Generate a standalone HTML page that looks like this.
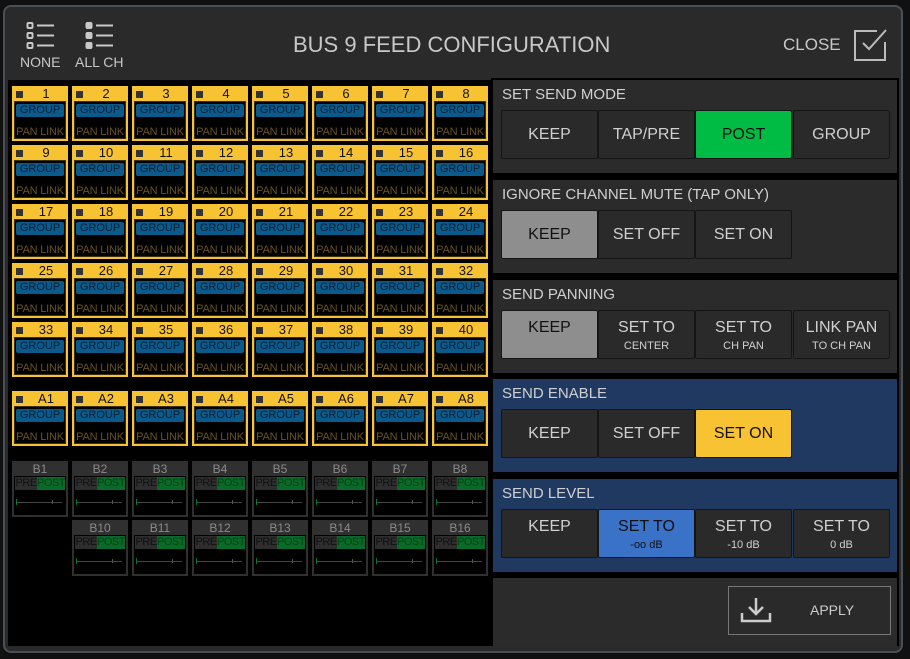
<!DOCTYPE html>
<html><head><meta charset="utf-8"><style>
*{box-sizing:border-box;margin:0;padding:0}
body{width:910px;height:659px;background:#111;font-family:"Liberation Sans",sans-serif;position:relative;overflow:hidden}
.dlg{position:absolute;left:3px;top:5px;width:900px;height:648px;background:#2a2a2a;border:2px solid #4a5055;border-radius:8px}
.a{position:absolute}
.hdr{color:#c8c8c8}
.lp{position:absolute;left:8px;top:80px;width:483px;height:566px;background:#000}
.c{position:absolute;width:56px;height:55px;background:#f8c332}
.c .sq{position:absolute;left:4px;top:5px;width:7px;height:7px;background:#333}
.c .n{position:absolute;left:12px;right:0;top:0px;text-align:center;font-size:13px;color:#111}
.c .in{position:absolute;left:2px;top:15px;width:52px;height:38px;background:#000;border:1px solid #3a2f10}
.c .g{position:absolute;left:1px;top:2px;width:48px;height:13px;background:#0b5a8c;border-radius:2px;font-size:11px;color:#0c1f33;text-align:center;line-height:13px}
.c .p{position:absolute;left:0;right:0;top:24px;font-size:11px;color:#6a5220;text-align:center;white-space:nowrap;letter-spacing:-0.2px}
.b{position:absolute;width:56px;height:56px;background:#303030}
.b .l{position:absolute;left:0;right:0;top:1px;text-align:center;font-size:12px;color:#8a8a8a}
.b .in{position:absolute;left:2px;top:15px;width:52px;height:39px;background:#000}
.b .pre{position:absolute;left:1px;top:1px;width:22px;height:13px;background:#2e2e2e;font-size:11px;line-height:13px;text-align:center;color:#111;letter-spacing:-0.5px}
.b .po{position:absolute;left:23px;top:1px;width:28px;height:13px;background:#0a6a2a;font-size:11px;line-height:13px;text-align:center;color:#041;letter-spacing:-0.5px}
.b .ln{position:absolute;left:2px;top:26px;width:46px;height:1px;background:#444}
.b .tk{position:absolute;left:2px;top:23px;width:1px;height:6px;background:#0a7a2a}
.b .tm{position:absolute;left:38px;top:24px;width:1px;height:4px;background:#555}
.sec{position:absolute;left:493px;width:404px;background:#2b2b2b}
.sec.bl{background:#1f3961}
.sec .t{position:absolute;left:9px;top:6px;font-size:15px;color:#d0d0d0}
.bt{position:absolute;height:49px;width:97px;background:#2a2a2a;border:1px solid #151515;border-radius:2px;color:#d0d0d0;text-align:center;font-size:16px}
.bt .m{display:block;margin-top:15px}
.bt.two .m{margin-top:8px}
.bt small{display:block;font-size:11px;margin-top:3px}
</style></head><body>
<div class="dlg"></div>
<svg class="a" style="left:26px;top:21px" width="32" height="30" viewBox="0 0 32 30" fill="none" stroke="#c8c8c8" stroke-width="2"><rect x="1.5" y="2" width="5" height="5" rx="1"/><rect x="1.5" y="12" width="5" height="5" rx="1"/><rect x="1.5" y="22" width="5" height="5" rx="1"/><path d="M11 4.5h17M11 14.5h17M11 24.5h17"/></svg>
<svg class="a" style="left:85px;top:21px" width="32" height="30" viewBox="0 0 32 30" fill="#c8c8c8" stroke="#c8c8c8" stroke-width="2"><rect x="1.5" y="2" width="5" height="5" rx="1"/><rect x="1.5" y="12" width="5" height="5" rx="1"/><rect x="1.5" y="22" width="5" height="5" rx="1"/><path d="M11 4.5h17M11 14.5h17M11 24.5h17"/></svg>
<div class="a hdr" style="left:20px;top:54px;font-size:14px">NONE</div>
<div class="a hdr" style="left:75px;top:54px;font-size:14px">ALL CH</div>
<div class="a hdr" style="left:293px;top:32px;font-size:22px">BUS 9 FEED CONFIGURATION</div>
<div class="a hdr" style="left:783px;top:35px;font-size:17px">CLOSE</div>
<svg class="a" style="left:853px;top:28px" width="35" height="34" viewBox="0 0 35 34" fill="none" stroke="#bbb" stroke-width="2"><path d="M24 3H2v29h30V14"/><path d="M10 15l6 6L33 2"/></svg>
<div class="lp"></div>

<div class="c" style="left:12px;top:86px"><div class="sq"></div><div class="n">1</div><div class="in"><div class="g">GROUP</div><div class="p">PAN LINK</div></div></div>
<div class="c" style="left:72px;top:86px"><div class="sq"></div><div class="n">2</div><div class="in"><div class="g">GROUP</div><div class="p">PAN LINK</div></div></div>
<div class="c" style="left:132px;top:86px"><div class="sq"></div><div class="n">3</div><div class="in"><div class="g">GROUP</div><div class="p">PAN LINK</div></div></div>
<div class="c" style="left:192px;top:86px"><div class="sq"></div><div class="n">4</div><div class="in"><div class="g">GROUP</div><div class="p">PAN LINK</div></div></div>
<div class="c" style="left:252px;top:86px"><div class="sq"></div><div class="n">5</div><div class="in"><div class="g">GROUP</div><div class="p">PAN LINK</div></div></div>
<div class="c" style="left:312px;top:86px"><div class="sq"></div><div class="n">6</div><div class="in"><div class="g">GROUP</div><div class="p">PAN LINK</div></div></div>
<div class="c" style="left:372px;top:86px"><div class="sq"></div><div class="n">7</div><div class="in"><div class="g">GROUP</div><div class="p">PAN LINK</div></div></div>
<div class="c" style="left:432px;top:86px"><div class="sq"></div><div class="n">8</div><div class="in"><div class="g">GROUP</div><div class="p">PAN LINK</div></div></div>

<div class="c" style="left:12px;top:145px"><div class="sq"></div><div class="n">9</div><div class="in"><div class="g">GROUP</div><div class="p">PAN LINK</div></div></div>
<div class="c" style="left:72px;top:145px"><div class="sq"></div><div class="n">10</div><div class="in"><div class="g">GROUP</div><div class="p">PAN LINK</div></div></div>
<div class="c" style="left:132px;top:145px"><div class="sq"></div><div class="n">11</div><div class="in"><div class="g">GROUP</div><div class="p">PAN LINK</div></div></div>
<div class="c" style="left:192px;top:145px"><div class="sq"></div><div class="n">12</div><div class="in"><div class="g">GROUP</div><div class="p">PAN LINK</div></div></div>
<div class="c" style="left:252px;top:145px"><div class="sq"></div><div class="n">13</div><div class="in"><div class="g">GROUP</div><div class="p">PAN LINK</div></div></div>
<div class="c" style="left:312px;top:145px"><div class="sq"></div><div class="n">14</div><div class="in"><div class="g">GROUP</div><div class="p">PAN LINK</div></div></div>
<div class="c" style="left:372px;top:145px"><div class="sq"></div><div class="n">15</div><div class="in"><div class="g">GROUP</div><div class="p">PAN LINK</div></div></div>
<div class="c" style="left:432px;top:145px"><div class="sq"></div><div class="n">16</div><div class="in"><div class="g">GROUP</div><div class="p">PAN LINK</div></div></div>

<div class="c" style="left:12px;top:204px"><div class="sq"></div><div class="n">17</div><div class="in"><div class="g">GROUP</div><div class="p">PAN LINK</div></div></div>
<div class="c" style="left:72px;top:204px"><div class="sq"></div><div class="n">18</div><div class="in"><div class="g">GROUP</div><div class="p">PAN LINK</div></div></div>
<div class="c" style="left:132px;top:204px"><div class="sq"></div><div class="n">19</div><div class="in"><div class="g">GROUP</div><div class="p">PAN LINK</div></div></div>
<div class="c" style="left:192px;top:204px"><div class="sq"></div><div class="n">20</div><div class="in"><div class="g">GROUP</div><div class="p">PAN LINK</div></div></div>
<div class="c" style="left:252px;top:204px"><div class="sq"></div><div class="n">21</div><div class="in"><div class="g">GROUP</div><div class="p">PAN LINK</div></div></div>
<div class="c" style="left:312px;top:204px"><div class="sq"></div><div class="n">22</div><div class="in"><div class="g">GROUP</div><div class="p">PAN LINK</div></div></div>
<div class="c" style="left:372px;top:204px"><div class="sq"></div><div class="n">23</div><div class="in"><div class="g">GROUP</div><div class="p">PAN LINK</div></div></div>
<div class="c" style="left:432px;top:204px"><div class="sq"></div><div class="n">24</div><div class="in"><div class="g">GROUP</div><div class="p">PAN LINK</div></div></div>

<div class="c" style="left:12px;top:263px"><div class="sq"></div><div class="n">25</div><div class="in"><div class="g">GROUP</div><div class="p">PAN LINK</div></div></div>
<div class="c" style="left:72px;top:263px"><div class="sq"></div><div class="n">26</div><div class="in"><div class="g">GROUP</div><div class="p">PAN LINK</div></div></div>
<div class="c" style="left:132px;top:263px"><div class="sq"></div><div class="n">27</div><div class="in"><div class="g">GROUP</div><div class="p">PAN LINK</div></div></div>
<div class="c" style="left:192px;top:263px"><div class="sq"></div><div class="n">28</div><div class="in"><div class="g">GROUP</div><div class="p">PAN LINK</div></div></div>
<div class="c" style="left:252px;top:263px"><div class="sq"></div><div class="n">29</div><div class="in"><div class="g">GROUP</div><div class="p">PAN LINK</div></div></div>
<div class="c" style="left:312px;top:263px"><div class="sq"></div><div class="n">30</div><div class="in"><div class="g">GROUP</div><div class="p">PAN LINK</div></div></div>
<div class="c" style="left:372px;top:263px"><div class="sq"></div><div class="n">31</div><div class="in"><div class="g">GROUP</div><div class="p">PAN LINK</div></div></div>
<div class="c" style="left:432px;top:263px"><div class="sq"></div><div class="n">32</div><div class="in"><div class="g">GROUP</div><div class="p">PAN LINK</div></div></div>

<div class="c" style="left:12px;top:322px"><div class="sq"></div><div class="n">33</div><div class="in"><div class="g">GROUP</div><div class="p">PAN LINK</div></div></div>
<div class="c" style="left:72px;top:322px"><div class="sq"></div><div class="n">34</div><div class="in"><div class="g">GROUP</div><div class="p">PAN LINK</div></div></div>
<div class="c" style="left:132px;top:322px"><div class="sq"></div><div class="n">35</div><div class="in"><div class="g">GROUP</div><div class="p">PAN LINK</div></div></div>
<div class="c" style="left:192px;top:322px"><div class="sq"></div><div class="n">36</div><div class="in"><div class="g">GROUP</div><div class="p">PAN LINK</div></div></div>
<div class="c" style="left:252px;top:322px"><div class="sq"></div><div class="n">37</div><div class="in"><div class="g">GROUP</div><div class="p">PAN LINK</div></div></div>
<div class="c" style="left:312px;top:322px"><div class="sq"></div><div class="n">38</div><div class="in"><div class="g">GROUP</div><div class="p">PAN LINK</div></div></div>
<div class="c" style="left:372px;top:322px"><div class="sq"></div><div class="n">39</div><div class="in"><div class="g">GROUP</div><div class="p">PAN LINK</div></div></div>
<div class="c" style="left:432px;top:322px"><div class="sq"></div><div class="n">40</div><div class="in"><div class="g">GROUP</div><div class="p">PAN LINK</div></div></div>

<div class="c" style="left:12px;top:391px"><div class="sq"></div><div class="n">A1</div><div class="in"><div class="g">GROUP</div><div class="p">PAN LINK</div></div></div>
<div class="c" style="left:72px;top:391px"><div class="sq"></div><div class="n">A2</div><div class="in"><div class="g">GROUP</div><div class="p">PAN LINK</div></div></div>
<div class="c" style="left:132px;top:391px"><div class="sq"></div><div class="n">A3</div><div class="in"><div class="g">GROUP</div><div class="p">PAN LINK</div></div></div>
<div class="c" style="left:192px;top:391px"><div class="sq"></div><div class="n">A4</div><div class="in"><div class="g">GROUP</div><div class="p">PAN LINK</div></div></div>
<div class="c" style="left:252px;top:391px"><div class="sq"></div><div class="n">A5</div><div class="in"><div class="g">GROUP</div><div class="p">PAN LINK</div></div></div>
<div class="c" style="left:312px;top:391px"><div class="sq"></div><div class="n">A6</div><div class="in"><div class="g">GROUP</div><div class="p">PAN LINK</div></div></div>
<div class="c" style="left:372px;top:391px"><div class="sq"></div><div class="n">A7</div><div class="in"><div class="g">GROUP</div><div class="p">PAN LINK</div></div></div>
<div class="c" style="left:432px;top:391px"><div class="sq"></div><div class="n">A8</div><div class="in"><div class="g">GROUP</div><div class="p">PAN LINK</div></div></div>

<div class="b" style="left:12px;top:461px"><div class="l">B1</div><div class="in"><div class="pre">PRE</div><div class="po">POST</div><div class="ln"></div><div class="tm"></div><div class="tk"></div></div></div>
<div class="b" style="left:72px;top:461px"><div class="l">B2</div><div class="in"><div class="pre">PRE</div><div class="po">POST</div><div class="ln"></div><div class="tm"></div><div class="tk"></div></div></div>
<div class="b" style="left:132px;top:461px"><div class="l">B3</div><div class="in"><div class="pre">PRE</div><div class="po">POST</div><div class="ln"></div><div class="tm"></div><div class="tk"></div></div></div>
<div class="b" style="left:192px;top:461px"><div class="l">B4</div><div class="in"><div class="pre">PRE</div><div class="po">POST</div><div class="ln"></div><div class="tm"></div><div class="tk"></div></div></div>
<div class="b" style="left:252px;top:461px"><div class="l">B5</div><div class="in"><div class="pre">PRE</div><div class="po">POST</div><div class="ln"></div><div class="tm"></div><div class="tk"></div></div></div>
<div class="b" style="left:312px;top:461px"><div class="l">B6</div><div class="in"><div class="pre">PRE</div><div class="po">POST</div><div class="ln"></div><div class="tm"></div><div class="tk"></div></div></div>
<div class="b" style="left:372px;top:461px"><div class="l">B7</div><div class="in"><div class="pre">PRE</div><div class="po">POST</div><div class="ln"></div><div class="tm"></div><div class="tk"></div></div></div>
<div class="b" style="left:432px;top:461px"><div class="l">B8</div><div class="in"><div class="pre">PRE</div><div class="po">POST</div><div class="ln"></div><div class="tm"></div><div class="tk"></div></div></div>

<div class="b" style="left:72px;top:520px"><div class="l">B10</div><div class="in"><div class="pre">PRE</div><div class="po">POST</div><div class="ln"></div><div class="tm"></div><div class="tk"></div></div></div>
<div class="b" style="left:132px;top:520px"><div class="l">B11</div><div class="in"><div class="pre">PRE</div><div class="po">POST</div><div class="ln"></div><div class="tm"></div><div class="tk"></div></div></div>
<div class="b" style="left:192px;top:520px"><div class="l">B12</div><div class="in"><div class="pre">PRE</div><div class="po">POST</div><div class="ln"></div><div class="tm"></div><div class="tk"></div></div></div>
<div class="b" style="left:252px;top:520px"><div class="l">B13</div><div class="in"><div class="pre">PRE</div><div class="po">POST</div><div class="ln"></div><div class="tm"></div><div class="tk"></div></div></div>
<div class="b" style="left:312px;top:520px"><div class="l">B14</div><div class="in"><div class="pre">PRE</div><div class="po">POST</div><div class="ln"></div><div class="tm"></div><div class="tk"></div></div></div>
<div class="b" style="left:372px;top:520px"><div class="l">B15</div><div class="in"><div class="pre">PRE</div><div class="po">POST</div><div class="ln"></div><div class="tm"></div><div class="tk"></div></div></div>
<div class="b" style="left:432px;top:520px"><div class="l">B16</div><div class="in"><div class="pre">PRE</div><div class="po">POST</div><div class="ln"></div><div class="tm"></div><div class="tk"></div></div></div>

<div class="a" style="left:491px;top:78px;width:408px;height:568px;background:#000"></div>

<div class="sec" style="top:80px;height:93px"><div class="t">SET SEND MODE</div>
<div class="bt" style="left:8px;top:30px"><span class="m">KEEP</span></div>
<div class="bt" style="left:105px;top:30px"><span class="m">TAP/PRE</span></div>
<div class="bt" style="left:202px;top:30px;background:#00bb44;color:#111"><span class="m">POST</span></div>
<div class="bt" style="left:300px;top:30px"><span class="m">GROUP</span></div>
</div>
<div class="sec" style="top:180px;height:93px"><div class="t">IGNORE CHANNEL MUTE (TAP ONLY)</div>
<div class="bt" style="left:8px;top:30px;background:#8e8e8e;color:#111"><span class="m">KEEP</span></div>
<div class="bt" style="left:105px;top:30px"><span class="m">SET OFF</span></div>
<div class="bt" style="left:202px;top:30px"><span class="m">SET ON</span></div>
</div>
<div class="sec" style="top:280px;height:93px"><div class="t">SEND PANNING</div>
<div class="bt two" style="left:8px;top:30px;background:#8e8e8e;color:#111"><span class="m">KEEP</span></div>
<div class="bt two" style="left:105px;top:30px"><span class="m">SET TO</span><small>CENTER</small></div>
<div class="bt two" style="left:202px;top:30px"><span class="m">SET TO</span><small>CH PAN</small></div>
<div class="bt two" style="left:300px;top:30px"><span class="m">LINK PAN</span><small>TO CH PAN</small></div>
</div>
<div class="sec bl" style="top:379px;height:93px"><div class="t">SEND ENABLE</div>
<div class="bt" style="left:8px;top:30px"><span class="m">KEEP</span></div>
<div class="bt" style="left:105px;top:30px"><span class="m">SET OFF</span></div>
<div class="bt" style="left:202px;top:30px;background:#f8c332;color:#111"><span class="m">SET ON</span></div>
</div>
<div class="sec bl" style="top:479px;height:93px"><div class="t">SEND LEVEL</div>
<div class="bt two" style="left:8px;top:30px"><span class="m">KEEP</span></div>
<div class="bt two" style="left:105px;top:30px;background:#3a72c8;color:#111"><span class="m">SET TO</span><small>-oo dB</small></div>
<div class="bt two" style="left:202px;top:30px"><span class="m">SET TO</span><small>-10 dB</small></div>
<div class="bt two" style="left:300px;top:30px"><span class="m">SET TO</span><small>0 dB</small></div>
</div>
<div class="sec" style="top:578px;height:68px">
<div class="a" style="left:235px;top:8px;width:163px;height:49px;border:1px solid #777;background:#2a2a2a"></div>
<svg class="a" style="left:247px;top:18px" width="32" height="28" viewBox="0 0 32 28" fill="none" stroke="#ccc" stroke-width="2.5"><path d="M16 2v16M9 11l7 7 7-7"/><path d="M2 17v8h28v-8"/></svg>
<div class="a" style="left:317px;top:24px;font-size:14px;color:#ccc">APPLY</div>
</div>
</body></html>
